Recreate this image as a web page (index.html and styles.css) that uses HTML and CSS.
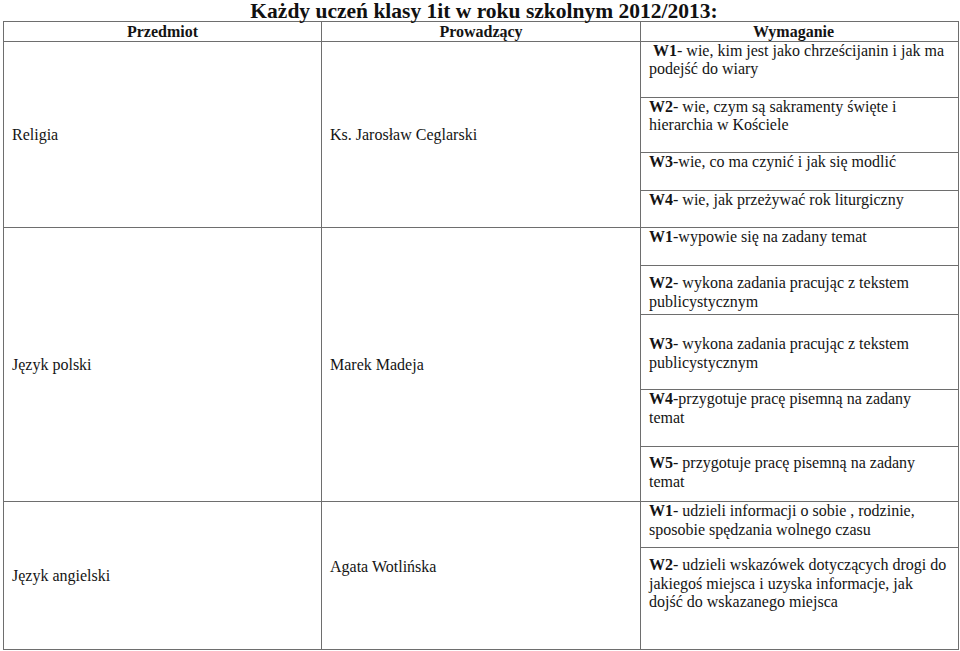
FILE: index.html
```
<!DOCTYPE html>
<html lang="pl">
<head>
<meta charset="utf-8">
<title>Każdy uczeń klasy 1it</title>
<link rel="stylesheet" href="styles.css">
</head>
<body>
<h1 class="title">Każdy uczeń klasy 1it w roku szkolnym 2012/2013:</h1>
<table class="plan">
  <colgroup>
    <col class="c-subj">
    <col class="c-teach">
    <col class="c-req">
  </colgroup>
  <thead>
    <tr>
      <th>Przedmiot</th>
      <th>Prowadzący</th>
      <th class="h-req">Wymaganie</th>
    </tr>
  </thead>
  <tbody>
    <tr>
      <td class="subj" rowspan="4">Religia</td>
      <td class="teach" rowspan="4">Ks. Jarosław Ceglarski</td>
      <td class="req r1">&nbsp;<b>W1</b>- wie, kim jest jako chrześcijanin i jak ma<br>podejść do wiary</td>
    </tr>
    <tr><td class="req r2"><b>W2</b>- wie, czym są sakramenty święte i<br>hierarchia w Kościele</td></tr>
    <tr><td class="req r3"><b>W3</b>-wie, co ma czynić i jak się modlić</td></tr>
    <tr><td class="req r4"><b>W4</b>- wie, jak przeżywać rok liturgiczny</td></tr>

    <tr>
      <td class="subj" rowspan="5">Język polski</td>
      <td class="teach" rowspan="5">Marek Madeja</td>
      <td class="req p1"><b>W1</b>-wypowie się na zadany temat</td>
    </tr>
    <tr><td class="req p2"><b>W2</b>- wykona zadania pracując z tekstem<br>publicystycznym</td></tr>
    <tr><td class="req p3"><b>W3</b>- wykona zadania pracując z tekstem<br>publicystycznym</td></tr>
    <tr><td class="req p4"><b>W4</b>-przygotuje pracę pisemną na zadany<br>temat</td></tr>
    <tr><td class="req p5"><b>W5</b>- przygotuje pracę pisemną na zadany<br>temat</td></tr>

    <tr>
      <td class="subj" rowspan="2">Język angielski</td>
      <td class="teach teach-tail" rowspan="2">Agata Wotlińska</td>
      <td class="req e1"><b>W1</b>- udzieli informacji o sobie , rodzinie,<br>sposobie spędzania wolnego czasu</td>
    </tr>
    <tr><td class="req e2"><b>W2</b>- udzieli wskazówek dotyczących drogi do<br>jakiegoś miejsca i uzyska informacje, jak<br>dojść do wskazanego miejsca</td></tr>
  </tbody>
</table>
</body>
</html>
```
FILE: styles.css
```
html, body {
  margin: 0;
  padding: 0;
  background: #ffffff;
}

body {
  font-family: "Liberation Serif", "Times New Roman", serif;
  color: #141414;
  font-size: 16px;
  width: 960px;
}

.title {
  margin: 0;
  padding: 1px 0 0 8px;
  font-family: "Liberation Serif", "Times New Roman", serif;
  font-size: 21.5px;
  line-height: 20px;
  font-weight: bold;
  text-align: center;
  color: #111;
}

.plan {
  margin-left: 3px;
  width: 955px;
  table-layout: fixed;
  border-collapse: collapse;
  font-family: "Liberation Serif", "Times New Roman", serif;
  font-size: 16px;
  color: #141414;
}

.c-subj { width: 318px; }
.c-teach { width: 319px; }
.c-req { width: 318px; }

.plan th,
.plan td {
  border: 1px solid #6e6e6e;
  padding: 0;
  font-family: "Liberation Serif", "Times New Roman", serif;
}

.plan th {
  font-weight: bold;
  line-height: 19px;
  text-align: center;
}

.plan th.h-req {
  padding-right: 12px;
}

.plan td {
  line-height: 18.4px;
}

.plan td.subj,
.plan td.teach {
  vertical-align: middle;
  padding-left: 8px;
}

.plan td.teach-tail { padding-bottom: 18.4px; }

.plan td.req {
  vertical-align: top;
  padding-left: 8px;
  padding-right: 2px;
  white-space: nowrap;
}

.req b { font-weight: bold; }

.plan td.r1 { padding-bottom: 18px; }
.plan td.r2 { padding-bottom: 17px; }
.plan td.r3 { padding-bottom: 19px; }
.plan td.r4 { padding-bottom: 18px; }

.plan td.p1 { padding-bottom: 18.6px; }
.plan td.p2 { padding-top: 8px; padding-bottom: 3.2px; }
.plan td.p3 { padding-top: 20px; padding-bottom: 17.2px; }
.plan td.p4 { padding-bottom: 19.2px; }
.plan td.p5 { padding-top: 7px; padding-bottom: 10.2px; }

.plan td.e1 { padding-bottom: 8.2px; }
.plan td.e2 { padding-top: 8px; padding-bottom: 37.8px; }
```
